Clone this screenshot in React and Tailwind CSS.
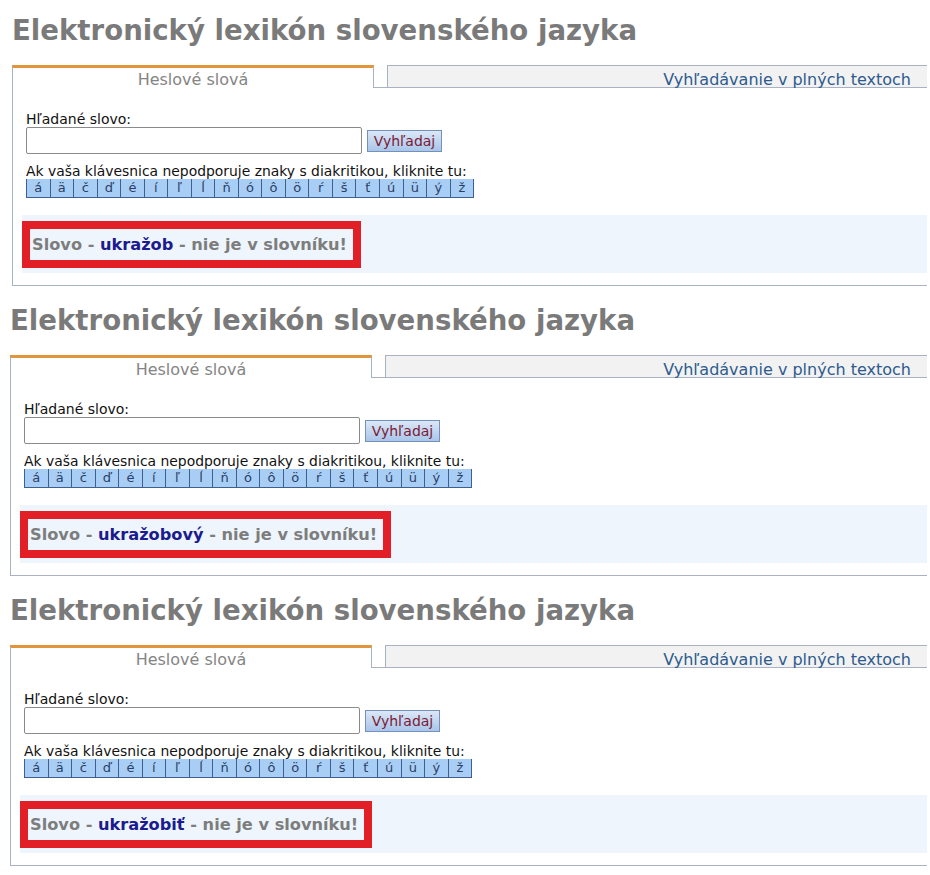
import React from 'react';

const CHARS = ['á', 'ä', 'č', 'ď', 'é', 'í', 'ľ', 'ĺ', 'ň', 'ó', 'ô', 'ö', 'ŕ', 'š', 'ť', 'ú', 'ü', 'ý', 'ž'];

const Panel = ({ word, offset, boxWidth }) => {
  return (
    <div className={`h-[290px] ${offset}`}>
      <div className="h-[65px] pt-[17px]">
        <h1 className="text-[27.6px] leading-[28px] font-bold text-[#7a7a7a] whitespace-nowrap">
          Elektronický lexikón slovenského jazyka
        </h1>
      </div>
      <div className={boxWidth}>
        {/* tabs */}
        <div className="flex h-[23px] text-[16px]">
          <div className="w-[362px] border-t-[3px] border-t-[#e2953a] border-l border-r border-[#a8b2c2] pt-[4px] leading-[15px] text-center text-[#858585]">
            Heslové slová
          </div>
          <div className="w-[13px] border-b border-[#a8b2c2]"></div>
          <div className="flex-1 border-t border-l border-b border-[#a8b2c2] bg-[#f2f2f2] pt-[6px] leading-[15px] text-right pr-[16px] text-[#2d5b8e]">
            Vyhľadávanie v plných textoch
          </div>
        </div>
        {/* body */}
        <div className="border-l border-b border-[#a8b2c2] pl-[9px] pt-[24px] pb-[12px]">
          <div className="pl-[4px]">
            <div className="text-[14px] leading-[15px] text-[#111]">Hľadané slovo:</div>
            <div className="flex items-center gap-[5px]">
              <div className="w-[336px] h-[27px] border border-[#8a8a8a] rounded-[2px] bg-white"></div>
              <button className="w-[75px] h-[22px] border border-[#7292bb] bg-gradient-to-b from-[#dbe7f6] to-[#a9c5ea] text-[14px] leading-[20px] text-[#7a1a35]">
                Vyhľadaj
              </button>
            </div>
            <div className="mt-[10px] text-[13.9px] leading-[15px] text-[#111] whitespace-nowrap">
              Ak vaša klávesnica nepodporuje znaky s diakritikou, kliknite tu:
            </div>
            <div className="flex w-[448px] h-[19px] border-l border-b border-[#3f5f8e]">
              {CHARS.map((c) => (
                <div
                  key={c}
                  className="flex-1 border-r border-[#3f5f8e] bg-[#a9cef5] text-center text-[13px] leading-[18px] text-[#2b3f66]"
                >
                  {c}
                </div>
              ))}
            </div>
          </div>
          <div className="mt-[17px] h-[58px] bg-[#eef5fc] pt-[6px]">
            <div className="inline-block border-[8px] border-[#e21f26] bg-[#eef5fc] h-[47px] pl-[2px] pr-[6px] text-[16.2px] leading-[31px] font-bold text-[#7d7d7d] whitespace-nowrap">
              Slovo - <span className="text-[#1b1b8f]">{word}</span> - nie je v slovníku!
            </div>
          </div>
        </div>
      </div>
    </div>
  );
};

const App = () => {
  return (
    <div className="w-[930px] h-[875px] overflow-hidden bg-white" style={{ fontFamily: '"DejaVu Sans", Verdana, sans-serif' }}>
      <Panel word="ukražob" offset="pl-[12px]" boxWidth="w-[915px]" />
      <Panel word="ukražobový" offset="pl-[10px]" boxWidth="w-[917px]" />
      <Panel word="ukražobiť" offset="pl-[10px]" boxWidth="w-[917px]" />
    </div>
  );
};

export default App;
